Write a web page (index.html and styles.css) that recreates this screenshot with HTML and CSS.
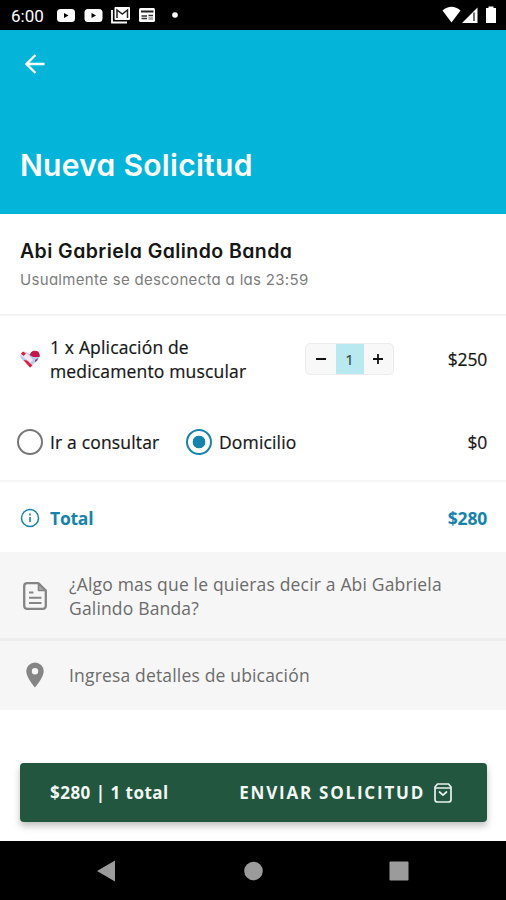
FILE: index.html
```html
<!DOCTYPE html>
<html lang="es">
<head>
  <meta charset="UTF-8">
  <meta name="viewport" content="width=device-width, initial-scale=1.0">
  <title>Nueva Solicitud</title>
  <link rel="stylesheet" href="styles.css">
</head>
<body>

  <div class="status-bar">
    <span class="clock">6:00</span>
    <svg class="status-left" width="124" height="18" viewBox="0 0 124 18" fill="#fff">
      <rect x="0" y="3" width="18" height="13" rx="3.5"/>
      <path d="M7 7v5l4.500-2.500z" fill="#000"/>
      <rect x="27.500" y="3" width="18" height="13" rx="3.5"/>
      <path d="M34.500 7v5l4.500-2.500z" fill="#000"/>
      <path d="M55 4v12.500h15" fill="none" stroke="#fff" stroke-width="1.800"/>
      <rect x="57.500" y="1" width="15.500" height="13" rx="1"/>
      <path d="M60 12V4l5.300 4 5.200-4v8" fill="none" stroke="#222" stroke-width="1.500"/>
      <rect x="82" y="2" width="16" height="14" rx="1.500"/>
      <path d="M84 5.500h12.500" stroke="#222" stroke-width="2"/>
      <path d="M84.500 10h5.500M84.500 12.500h5.500M91.500 9.500h4.500" stroke="#333" stroke-width="1.500"/>
      <path d="M91.500 11h4.500v3h-4.500z" fill="#aaa"/>
      <circle cx="118" cy="9" r="2.800"/>
    </svg>
    <svg class="status-right" width="56" height="18" viewBox="0 0 56 18" fill="#fff">
      <path d="M0.500 4.500Q9.500-3 18.500 4.500L9.500 16.500z"/>
      <path d="M20 17L35.500 1.500V17z"/>
      <path d="M32 6.500v8.500" stroke="#333" stroke-width="1.400"/>
      <path d="M46.500 2V0.500h5V2h2.500v15H44V2z"/>
    </svg>
  </div>

  <header>
    <svg class="back" width="20" height="20" viewBox="0 0 20 20" fill="none" stroke="#fff" stroke-width="2.300">
      <path d="M19.500 10H2M10.500 1L1.500 10l9 9"/>
    </svg>
    <h1>Nueva Solicitud</h1>
  </header>

  <section class="doctor">
    <h2>Abi Gabriela Galindo Banda</h2>
    <p>Usualmente se desconecta a las 23:59</p>
  </section>

  <section class="order">
    <div class="row service">
      <svg class="heart" width="20" height="18" viewBox="0 0 20 18">
        <path d="M10 17.500L1.500 9Q-1 5.500 1.500 3q3-2.500 6 0l2.500 1.500Q12 0.500 16 1q4.500 1.500 3.500 6-.5 2-9.500 10.500z" fill="#b9cdec"/>
        <path d="M1 5.500L4.500 2l3 2L13 10l-2.500 2.500z" fill="#f5e8f0"/>
        <path d="M1 3.500L3 1.500l3 2-2.500 2.500zM3.500 10l3.500.5 5.500 5-2.500 2zM12.500 1Q16 0 18.500 2l-3.500 3.500z" fill="#e5193f"/>
        <path d="M9.500 5Q11 1.500 13 1l5.500 1q1.800 2.500 1 5H13z" fill="#c5164c"/>
        <path d="M15 10l3-2-1 3-2 1z" fill="#8a3295"/>
      </svg>
      <p class="service-name">1 x Aplicación de medicamento muscular</p>
      <div class="stepper">
        <button>
          <svg width="12" height="12" viewBox="0 0 12 12" stroke="#111" stroke-width="2"><path d="M1 6h10"/></svg>
        </button>
        <span class="count">1</span>
        <button>
          <svg width="12" height="12" viewBox="0 0 12 12" stroke="#111" stroke-width="1.800"><path d="M1 6h10M6 1v10"/></svg>
        </button>
      </div>
      <span class="price">$250</span>
    </div>
    <div class="row place">
      <span class="radio"></span>
      <span class="label first">Ir a consultar</span>
      <span class="radio checked"></span>
      <span class="label">Domicilio</span>
      <span class="price">$0</span>
    </div>
  </section>

  <section class="row total">
    <svg width="20" height="20" viewBox="0 0 20 20" fill="none" stroke="#1683ad">
      <circle cx="10" cy="10" r="8.500" stroke-width="1.500"/>
      <path d="M10 5.500v2M10 9v5" stroke-width="1.600"/>
    </svg>
    <span class="total-label">Total</span>
    <span class="price">$280</span>
  </section>

  <section class="details">
    <div class="detail note">
      <svg width="24" height="28" viewBox="0 0 24 28" fill="none" stroke="#858585" stroke-width="2.300" stroke-linejoin="round">
        <path d="M15.500 1.200H4.200Q1.200 1.200 1.200 4.200v19.600q0 3 3 3h15.600q3 0 3-3V8.500z"/>
        <path d="M15.500 1.500V8.500h7z" fill="#aaa" stroke-width="1.600"/>
        <path d="M6 10.500h4.500M6 15.800h12.500M6 21h12.500" stroke-width="2"/>
      </svg>
      <p>¿Algo mas que le quieras decir a Abi Gabriela Galindo Banda?</p>
    </div>
    <div class="detail location">
      <svg width="24" height="26" viewBox="0 0 24 26">
        <path d="M12 .5a8.700 8.700 0 0 0-8.700 8.700C3.300 15.500 12 25.500 12 25.500s8.700-10 8.700-16.300A8.700 8.700 0 0 0 12 .5zm0 5.600a3.200 3.200 0 1 1 0 6.400 3.200 3.200 0 0 1 0-6.400z" fill="#858585"/>
      </svg>
      <p>Ingresa detalles de ubicación</p>
    </div>
  </section>

  <div class="submit-area">
    <button class="submit">
      <span class="summary">$280 | 1 total</span>
      <span class="send">ENVIAR SOLICITUD</span>
      <svg width="18" height="20" viewBox="0 0 18 20" fill="none" stroke="#e8f3ee" stroke-width="1.700" stroke-linejoin="round" stroke-linecap="round">
        <path d="M3.500 1h11l2.500 3v12.500q0 2.500-2.500 2.500h-11Q1 19 1 16.500V4zM1 5h16M5.500 9l3.500 3.200L12.500 9"/>
      </svg>
    </button>
  </div>

  <nav>
    <svg width="20" height="22" viewBox="0 0 20 22" fill="#9b9b9b"><path d="M0 11L18 .5v21z"/></svg>
    <svg width="20" height="20" viewBox="0 0 20 20" fill="#9b9b9b"><circle cx="10.500" cy="10" r="9.300"/></svg>
    <svg width="20" height="20" viewBox="0 0 20 20" fill="#9b9b9b"><rect x=".5" y=".5" width="19" height="19" rx="1"/></svg>
  </nav>

</body>
</html>
```
FILE: styles.css
```css
* {
  box-sizing: border-box;
}

body {
  margin: 0;
  height: 900px;
  display: flex;
  flex-direction: column;
  overflow: hidden;
  background-color: #fff;
  color: #161616;
  font-family: "Open Sans", sans-serif;
  font-size: 17.5px;
  line-height: 24px;
}

h1, h2, p {
  margin: 0;
}

button {
  border: none;
  padding: 0;
  background: none;
  font-family: inherit;
  cursor: pointer;
}

svg {
  flex: none;
}

.status-bar {
  height: 30px;
  padding: 0 8px 0 11px;
  display: flex;
  align-items: center;
  background-color: #000;
  color: #fff;
}

.clock {
  width: 46px;
  padding-top: 2px;
  font-family: Roboto, sans-serif;
  font-size: 17px;
}

.status-right {
  margin-left: auto;
}

header {
  height: 184px;
  padding: 24px 20px 0 25px;
  background-color: #04b5d9;
  color: #fff;
}

.back {
  display: block;
}

header h1 {
  margin: 72px 0 0 -5px;
  font-family: Inter, sans-serif;
  font-feature-settings: "cv11";
  font-size: 30px;
  font-weight: 600;
  letter-spacing: 0.3px;
  line-height: 38px;
}

.doctor {
  height: 102px;
  padding: 23px 20px 0;
  border-bottom: 2px solid #f4f4f4;
  font-family: Inter, sans-serif;
  font-feature-settings: "cv11";
}

.doctor h2 {
  font-size: 19.5px;
  font-weight: 600;
  letter-spacing: 0.43px;
  line-height: 28px;
}

.doctor p {
  margin-top: 3px;
  color: #7d7d7d;
  font-size: 15px;
  letter-spacing: 0.31px;
}

.order {
  height: 166px;
  padding-top: 19px;
  border-bottom: 2px solid #f6f6f6;
}

.row {
  display: flex;
  align-items: center;
  padding: 0 19px 0 20px;
}

.service {
  height: 48px;
}

.service,
.place {
  letter-spacing: 0.16px;
  -webkit-text-stroke: 0.2px #161616;
}

.service-name {
  width: 225px;
  margin: 0 30px 0 10px;
}

.stepper {
  display: flex;
  width: 89px;
  height: 32px;
  overflow: hidden;
  border: 1px solid #ececec;
  border-radius: 5px;
  background-color: #f8f8f8;
}

.stepper button {
  flex: 1;
  display: flex;
  align-items: center;
  justify-content: center;
}

.count {
  width: 28px;
  background-color: #b8e8f0;
  color: #37555b;
  font-size: 15px;
  line-height: 30px;
  text-align: center;
}

.price {
  margin-left: auto;
  letter-spacing: -0.2px;
}

.place {
  height: 26px;
  margin-top: 46px;
  padding-left: 17px;
}

.radio {
  width: 26px;
  height: 26px;
  border: 2.5px solid #777;
  border-radius: 50%;
}

.checked {
  border-color: #1683ad;
  background: radial-gradient(circle, #1683ad 6px, transparent 6.700px);
}

.label {
  margin-left: 7px;
}

.first {
  width: 136px;
}

.total {
  height: 70px;
  padding-top: 1px;
  color: #1683ad;
  font-weight: 700;
}

.total-label {
  margin-left: 10px;
  letter-spacing: -0.25px;
}

.details {
  height: 158px;
  background-color: #f6f6f6;
  color: #6b6b6b;
  letter-spacing: 0.17px;
}

.detail {
  display: flex;
  align-items: center;
  padding: 0 40px 0 23px;
}

.detail p {
  margin-left: 22px;
}

.note {
  height: 89px;
  padding-top: 2px;
  border-bottom: 3px solid #eee;
}

.location {
  height: 69px;
  padding-bottom: 2px;
}

.submit-area {
  flex: 1;
  padding: 53px 19px 0 20px;
}

.submit {
  display: flex;
  align-items: center;
  width: 100%;
  height: 59px;
  padding: 0 35px 0 30px;
  border-radius: 4px;
  background-color: #22563f;
  box-shadow: 0 4px 7px rgba(0, 0, 0, 0.25);
  color: #f1f8f4;
  font-size: 17px;
  font-weight: 700;
}

.summary {
  letter-spacing: 0.48px;
}

.send {
  margin-left: auto;
  margin-right: 9px;
  letter-spacing: 1.78px;
}

nav {
  height: 59px;
  padding: 0 97px;
  display: flex;
  align-items: center;
  justify-content: space-between;
  background-color: #000;
}
```
